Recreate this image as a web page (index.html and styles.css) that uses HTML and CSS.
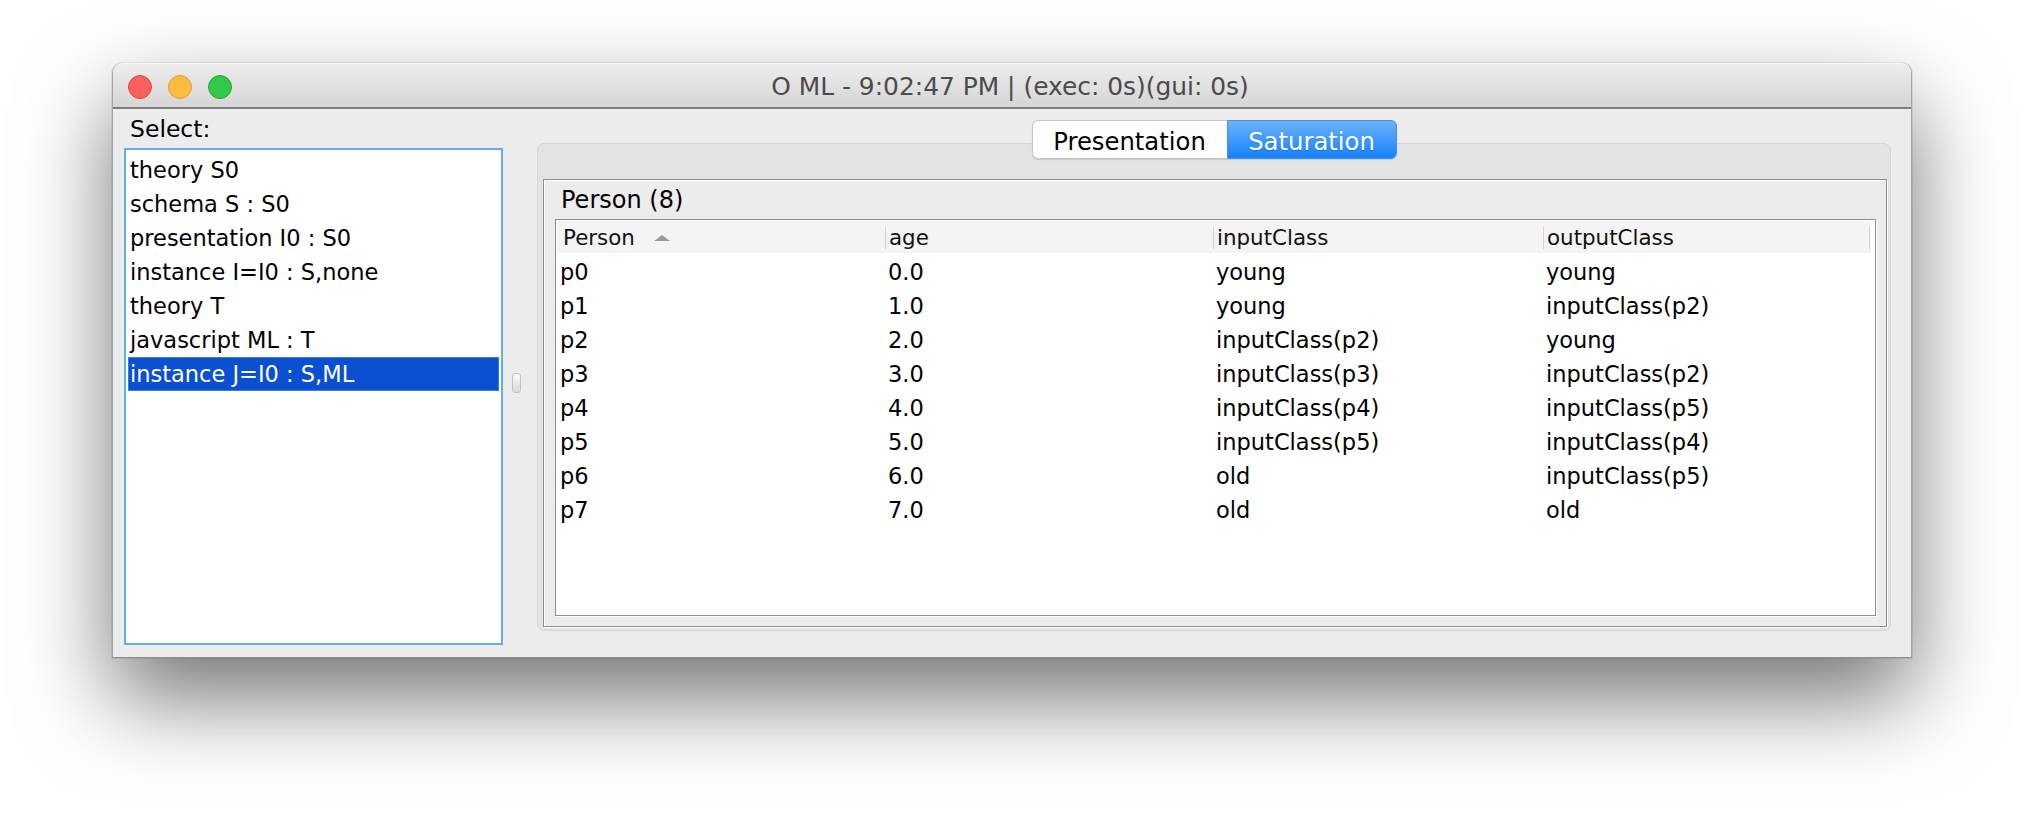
FILE: index.html
```html
<!DOCTYPE html>
<html>
<head>
<meta charset="utf-8">
<title>O ML</title>
<link rel="stylesheet" href="styles.css">
</head>
<body>
<div class="stage">
  <div class="window">
    <div class="titlebar">
      <div class="lights">
        <span class="light red"></span>
        <span class="light yellow"></span>
        <span class="light green"></span>
      </div>
      <div class="title">O ML - 9:02:47 PM | (exec: 0s)(gui: 0s)</div>
      <div class="spacer"></div>
    </div>
    <div class="content">
      <div class="left">
        <div class="select-label">Select:</div>
        <ul class="list">
          <li>theory S0</li>
          <li>schema S : S0</li>
          <li>presentation I0 : S0</li>
          <li>instance I=I0 : S,none</li>
          <li>theory T</li>
          <li>javascript ML : T</li>
          <li class="selected">instance J=I0 : S,ML</li>
        </ul>
      </div>
      <div class="divider"><div class="handle"></div></div>
      <div class="right">
        <div class="segmented">
          <div class="seg seg-left">Presentation</div>
          <div class="seg seg-right active">Saturation</div>
        </div>
        <div class="pane">
          <div class="panel">
            <div class="panel-title">Person (8)</div>
            <div class="table">
              <div class="thead">
                <div class="th th-first">Person<span class="sort"></span></div>
                <div class="th">age</div>
                <div class="th">inputClass</div>
                <div class="th th-last">outputClass</div>
              </div>
              <div class="tbody">
                <div class="tr"><div class="td">p0</div><div class="td">0.0</div><div class="td">young</div><div class="td">young</div></div>
                <div class="tr"><div class="td">p1</div><div class="td">1.0</div><div class="td">young</div><div class="td">inputClass(p2)</div></div>
                <div class="tr"><div class="td">p2</div><div class="td">2.0</div><div class="td">inputClass(p2)</div><div class="td">young</div></div>
                <div class="tr"><div class="td">p3</div><div class="td">3.0</div><div class="td">inputClass(p3)</div><div class="td">inputClass(p2)</div></div>
                <div class="tr"><div class="td">p4</div><div class="td">4.0</div><div class="td">inputClass(p4)</div><div class="td">inputClass(p5)</div></div>
                <div class="tr"><div class="td">p5</div><div class="td">5.0</div><div class="td">inputClass(p5)</div><div class="td">inputClass(p4)</div></div>
                <div class="tr"><div class="td">p6</div><div class="td">6.0</div><div class="td">old</div><div class="td">inputClass(p5)</div></div>
                <div class="tr"><div class="td">p7</div><div class="td">7.0</div><div class="td">old</div><div class="td">old</div></div>
              </div>
            </div>
          </div>
        </div>
      </div>
    </div>
  </div>
</div>
</body>
</html>
```

FILE: styles.css
```css
* {
  box-sizing: border-box;
  margin: 0;
  padding: 0;
}

html, body {
  width: 2024px;
  height: 820px;
  background: #ffffff;
  overflow: hidden;
}

body {
  font-family: "DejaVu Sans", "Liberation Sans", sans-serif;
  color: #000;
}

.stage {
  padding: 63px 0 0 112px;
}

.window {
  width: 1800px;
  height: 595px;
  display: flex;
  flex-direction: column;
  background: #ececec;
  border-left: 1px solid #a4a4a4;
  border-right: 1px solid #a4a4a4;
  border-bottom: 1px solid #8f8f8f;
  border-radius: 10px 10px 0 0;
  box-shadow: 0 40px 90px rgba(0, 0, 0, 0.55), 0 0 0 1px rgba(0, 0, 0, 0.08);
}

/* ---------- title bar ---------- */
.titlebar {
  height: 46px;
  flex: none;
  display: grid;
  grid-template-columns: 1fr auto 1fr;
  align-items: center;
  padding: 3px 19px 0 15px;
  background: linear-gradient(#ededed, #d5d5d5);
  border-top: 1px solid #f7f7f7;
  border-bottom: 2px solid #7d7d7d;
  border-radius: 10px 10px 0 0;
}

.lights {
  display: flex;
  gap: 16px;
}

.light {
  width: 24px;
  height: 24px;
  border-radius: 50%;
  display: block;
}

.red { background: #fc605c; border: 1px solid #df4a43; }
.yellow { background: #fdbc40; border: 1px solid #dea033; }
.green { background: #34c84a; border: 1px solid #28a938; }

.title {
  font-size: 24.9px;
  line-height: 40px;
  color: #4b4b4b;
  white-space: nowrap;
}

/* ---------- content ---------- */
.content {
  flex: 1;
  display: flex;
  padding-left: 11px;
}

.left {
  width: 379px;
  display: flex;
  flex-direction: column;
}

.select-label {
  height: 39px;
  padding: 2px 0 0 6px;
  line-height: 37px;
  font-size: 23.5px;
}

.list {
  height: 497px;
  list-style: none;
  background: #fff;
  border: 2px solid #66abea;
  padding: 3px 2px 0;
}

.list li {
  height: 34px;
  line-height: 34px;
  font-size: 22.5px;
  padding-left: 2px;
  white-space: nowrap;
}

.list li.selected {
  background: #0a50d0;
  color: #fff;
  box-shadow: inset 0 0 0 1px #3a7de4;
}

.divider {
  width: 34px;
  display: flex;
  align-items: center;
  padding-left: 9px;
}

.handle {
  width: 9px;
  height: 20px;
  border: 1px solid #c2c2c2;
  border-radius: 3px;
  background: linear-gradient(#fbfbfb, #d9d9d9);
}

.right {
  width: 1354px;
  display: flex;
  flex-direction: column;
  padding: 11px 0 26px;
}

.segmented {
  align-self: center;
  display: flex;
  height: 39px;
  position: relative;
  z-index: 1;
  margin-bottom: -16px;
  box-shadow: 0 1px 1px rgba(0, 0, 0, 0.12);
  border-radius: 6px;
}

.seg {
  font-size: 24.3px;
  line-height: 35px;
  padding-top: 3px;
  text-align: center;
  white-space: nowrap;
}

.seg-left {
  width: 195px;
  background: #fff;
  border: 1px solid #c5c5c5;
  border-right: none;
  border-radius: 6px 0 0 6px;
}

.seg-right {
  width: 170px;
  border-radius: 0 6px 6px 0;
}

.seg.active {
  color: #fff;
  background: linear-gradient(#6bb3fa, #1680fb);
  border: 1px solid #3f93f4;
  text-shadow: 0 1px 1px rgba(0, 40, 120, 0.25);
}

.pane {
  flex: 1;
  display: flex;
  flex-direction: column;
  background: #e3e3e3;
  border: 1px solid #d6d6d6;
  border-radius: 7px;
  padding: 35px 3px 3px 5px;
}

.panel {
  flex: 1;
  display: flex;
  flex-direction: column;
  background: #ececec;
  border: 1px solid #8e8e8e;
  box-shadow: inset 1px 1px 0 #fff, 1px 1px 0 #fff;
  padding: 0 10px 10px 11px;
}

.panel-title {
  height: 39px;
  line-height: 40px;
  font-size: 24px;
  padding-left: 6px;
}

.table {
  flex: 1;
  background: #fff;
  border: 1px solid #8e8e8e;
  box-shadow: inset 1px 1px 0 #fff, 1px 1px 0 #fff;
  padding: 1px 0 0 1px;
}

.thead {
  display: grid;
  grid-template-columns: 328px 328px 330px 327px;
  height: 32px;
  padding-top: 6px;
  background: #f4f4f4;
  margin-right: 4px;
}

.th {
  height: 22px;
  line-height: 22px;
  font-size: 21.4px;
  color: #111;
  padding-left: 3px;
  border-left: 1px solid #d2d2d2;
  white-space: nowrap;
}

.th-first {
  border-left: none;
  padding-left: 6px;
}

.th-last {
  border-right: 1px solid #d2d2d2;
}

.sort {
  display: inline-block;
  width: 0;
  height: 0;
  margin-left: 19px;
  vertical-align: 4px;
  border-left: 8px solid transparent;
  border-right: 8px solid transparent;
  border-bottom: 6px solid #9a9a9a;
}

.tbody {
  padding-top: 2px;
}

.tr {
  display: grid;
  grid-template-columns: 328px 328px 330px 327px;
  height: 34px;
}

.td {
  line-height: 34px;
  font-size: 22.5px;
  padding-left: 3px;
  white-space: nowrap;
}
```
